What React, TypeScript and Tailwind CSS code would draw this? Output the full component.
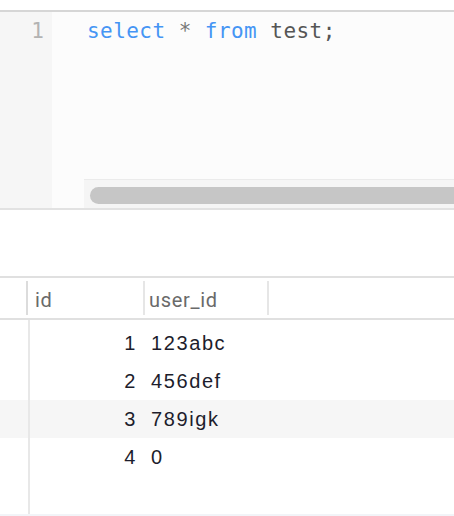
import React from "react";

const rows = [
  { id: 1, u: "123abc" },
  { id: 2, u: "456def" },
  { id: 3, u: "789igk" },
  { id: 4, u: "0" },
];

export default function App() {
  return (
    <div className="w-[454px] h-[516px] bg-white overflow-hidden flex flex-col">
      <div className="h-[10px] shrink-0" />
      <div className="h-[2px] shrink-0 bg-[#d6d6d6]" />
      {/* editor */}
      <div className="h-[198px] shrink-0 flex border-b-2 border-[#e2e2e2]">
        <div className="w-[52px] shrink-0 bg-[#f6f6f6] text-right pr-[8px] pt-[6px] text-[21px] leading-[26px] text-[#b3b3b3] [font-family:'DejaVu_Sans_Mono',monospace]">
          1
        </div>
        <div className="flex-1 bg-[#fcfcfc] flex flex-col">
          <div className="pl-[35px] pt-[6px] text-[21px] leading-[26px] whitespace-pre tracking-[0.45px] [font-family:'DejaVu_Sans_Mono',monospace]">
            <span className="text-[#4595f4]">select</span>
            <span className="text-[#777]"> * </span>
            <span className="text-[#4595f4]">from</span>
            <span className="text-[#555]"> test;</span>
          </div>
          <div className="flex-1" />
          <div className="ml-[32px] h-[29px] bg-[#f5f5f5] border-t border-[#ebebeb] pt-[7px] pl-[6px]">
            <div className="h-[17px] rounded-l-full bg-[#c6c6c6]" />
          </div>
        </div>
      </div>
      <div className="h-[66px] shrink-0" />
      {/* header */}
      <div className="h-[44px] shrink-0 flex items-stretch border-y-2 border-[#e0e0e0] text-[20px] text-[#6a6a6a] [font-family:Roboto,sans-serif]">
        <div className="w-[28px] shrink-0 py-[3px]">
          <div className="h-full border-r-2 border-[#dcdcdc]" />
        </div>
        <div className="w-[115px] shrink-0 flex items-center pl-[7px] pt-[3px] tracking-[0.7px]">id</div>
        <div className="w-[124px] shrink-0 flex items-center pl-[4px] pt-[3px] border-l-2 border-[#e6e6e6] my-[3px] tracking-[0.7px]">
          user_id
        </div>
        <div className="w-0 border-l-2 border-[#e6e6e6] my-[3px]" />
      </div>
      {/* body */}
      <div className="flex-1 relative flex flex-col pt-[4px] border-b-2 border-[#f2f4f8] text-[20px] text-[#1d1d2c] [font-family:'Liberation_Sans',sans-serif] tracking-[1.6px]">
        <div className="absolute left-[28px] top-0 bottom-0 w-[2px] bg-[#e8e8e8]" />
        {rows.map((r) => (
          <div
            key={r.id}
            className={`h-[38px] flex items-center ${r.id === 3 ? "bg-[#f6f6f6]" : ""}`}
          >
            <div className="w-[137px] shrink-0 text-right">{r.id}</div>
            <div className="pl-[14px]">{r.u}</div>
          </div>
        ))}
      </div>
    </div>
  );
}
